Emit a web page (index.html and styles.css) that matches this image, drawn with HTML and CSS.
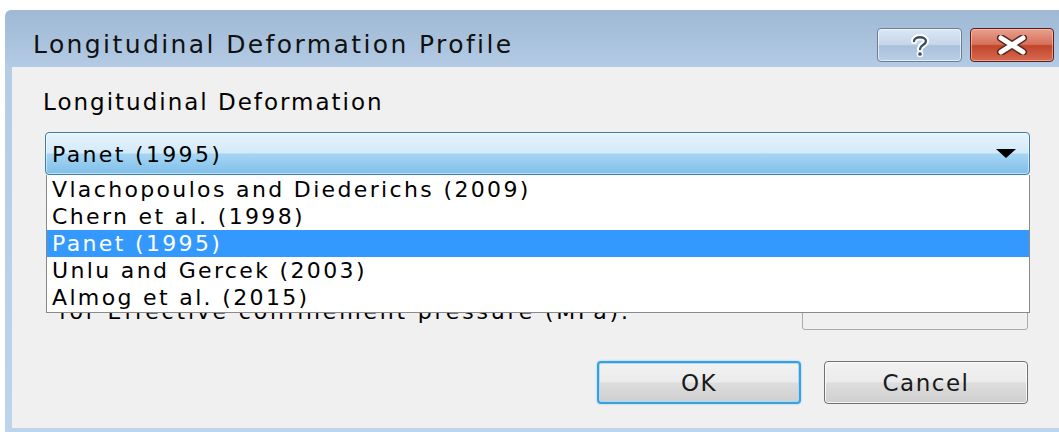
FILE: index.html
```html
<!DOCTYPE html>
<html>
<head>
<meta charset="utf-8">
<title>Longitudinal Deformation Profile</title>
<link rel="stylesheet" href="styles.css">
</head>
<body>
<div class="window">
  <div class="titlebar">
    <div class="title">Longitudinal Deformation Profile</div>
    <div class="caption-buttons">
      <div class="cap-btn help">
        <svg width="22" height="24" viewBox="0 0 22 24">
          <path d="M5 8 C5 3 17 3 17 8 C17 12 11 12 11 16" fill="none" stroke="#fff" stroke-width="6" stroke-linecap="round"/>
          <path d="M5 8 C5 3 17 3 17 8 C17 12 11 12 11 16" fill="none" stroke="#3d4f66" stroke-width="2.4" stroke-linecap="round"/>
          <circle cx="11" cy="21" r="2.6" fill="#3d4f66" stroke="#fff" stroke-width="1.5"/>
        </svg>
      </div>
      <div class="cap-btn close">
        <svg width="34" height="20" viewBox="0 0 34 20">
          <path d="M6 3 L28 17 M28 3 L6 17" stroke="#5a2a22" stroke-width="8" stroke-linecap="round"/>
          <path d="M6 3 L28 17 M28 3 L6 17" stroke="#fff" stroke-width="5" stroke-linecap="round"/>
        </svg>
      </div>
    </div>
  </div>
  <div class="client">
    <div class="field-label">Longitudinal Deformation</div>
    <div class="combo-wrap">
      <div class="combo">
        <span class="combo-text">Panet (1995)</span>
        <span class="combo-arrow"></span>
      </div>
      <ul class="dropdown">
        <li>Vlachopoulos and Diederichs (2009)</li>
        <li>Chern et al. (1998)</li>
        <li class="selected">Panet (1995)</li>
        <li>Unlu and Gercek (2003)</li>
        <li>Almog et al. (2015)</li>
      </ul>
    </div>
    <div class="param-row">
      <span class="param-label">for Effective confinement pressure (MPa):</span>
      <span class="param-input"></span>
    </div>
    <div class="actions">
      <button class="btn default">OK</button>
      <button class="btn">Cancel</button>
    </div>
  </div>
</div>
</body>
</html>
```

FILE: styles.css
```css
html, body {
  margin: 0;
  padding: 0;
  background: #ffffff;
  overflow: hidden;
}

body {
  font-family: "DejaVu Sans", "Liberation Sans", sans-serif;
  color: #000;
  width: 1059px;
  height: 432px;
}

.window {
  margin-top: 10px;
  margin-left: 5px;
  width: 1064px;
  height: 422px;
  background: linear-gradient(#9fb8d3, #b4cce6 60px, #bcd4ec);
  border-top-left-radius: 6px;
  display: flex;
  flex-direction: column;
  box-sizing: border-box;
  padding: 0 0 4px 7px;
}

.titlebar {
  height: 57px;
  display: flex;
  align-items: flex-start;
  justify-content: space-between;
  flex: none;
}

.title {
  font-size: 25px;
  letter-spacing: 2.4px;
  margin: 20px 0 0 21px;
  color: #111;
}

.caption-buttons {
  display: flex;
  gap: 8px;
  margin: 18px 15px 0 0;
}

.cap-btn {
  height: 34px;
  box-sizing: border-box;
  border-radius: 4px;
  display: flex;
  align-items: center;
  justify-content: center;
}

.cap-btn.help {
  width: 85px;
  border: 1px solid #6d7f96;
  background: linear-gradient(#dbe7f4, #c4d6ea 50%, #a9c1dc 52%, #b9cfe7);
  box-shadow: inset 0 0 0 1px rgba(255,255,255,0.6);
}

.cap-btn.close {
  width: 84px;
  border: 1px solid #5a1f18;
  background: linear-gradient(#e8a08f, #d5705a 48%, #c1442a 52%, #d76b50);
  box-shadow: inset 0 0 0 1px rgba(255,200,190,0.6);
}

.client {
  flex: 1;
  background: #f0f0f0;
  display: flex;
  flex-direction: column;
  padding: 0 0 0 31px;
  position: relative;
}

.field-label {
  font-size: 23px;
  letter-spacing: 2px;
  margin-top: 22px;
  height: 43px;
}

.combo-wrap {
  position: relative;
  width: 985px;
  margin-left: 2px;
}

.combo {
  height: 43px;
  box-sizing: border-box;
  border: 1px solid #3b7db0;
  border-radius: 4px;
  background: linear-gradient(#e7f3fc, #d3eaf9 48%, #a6d5f3 52%, #7fbfe9);
  box-shadow: inset 0 0 0 1px rgba(255,255,255,0.5);
  display: flex;
  align-items: center;
  justify-content: space-between;
  padding: 0 13px 0 6px;
}

.combo-text {
  font-size: 22px;
  letter-spacing: 2.35px;
  padding-top: 2px;
}

.combo-arrow {
  width: 0;
  height: 0;
  border-left: 10px solid transparent;
  border-right: 10px solid transparent;
  border-top: 9px solid #000;
}

.dropdown {
  position: absolute;
  top: 43px;
  left: 1px;
  right: 0;
  margin: 0;
  padding: 1px 0;
  list-style: none;
  background: #fff;
  border: 1px solid #8a8a8a;
  border-top: none;
  z-index: 2;
}

.dropdown li {
  height: 27px;
  line-height: 27px;
  font-size: 22px;
  letter-spacing: 2.35px;
  padding-left: 5px;
  white-space: nowrap;
}

.dropdown li.selected {
  background: #3399ff;
  color: #fff;
}

.param-row {
  display: flex;
  justify-content: space-between;
  align-items: flex-end;
  width: 985px;
  margin-top: 109px;
  height: 46px;
}

.param-label {
  font-size: 22px;
  letter-spacing: 2.8px;
  margin-left: 16px;
  margin-bottom: 6px;
}

.param-input {
  width: 226px;
  height: 46px;
  box-sizing: border-box;
  border: 1px solid #ababab;
  border-radius: 3px;
  background: #f0f0f0;
}

.actions {
  display: flex;
  justify-content: flex-end;
  gap: 23px;
  width: 985px;
  margin-top: 31px;
}

.btn {
  width: 204px;
  height: 43px;
  border: 1px solid #707070;
  border-radius: 4px;
  background: linear-gradient(#f2f2f2, #ebebeb 48%, #dddddd 52%, #cfcfcf);
  box-shadow: inset 0 0 0 1px rgba(255,255,255,0.8);
  font-family: "DejaVu Sans", "Liberation Sans", sans-serif;
  font-size: 23px;
  letter-spacing: 1.5px;
  color: #1a1a1a;
  padding: 0;
}

.btn.default {
  border: 2px solid #3c9fd9;
  box-shadow: inset 0 0 0 1px #a6dcf5, 0 0 2px #7cc4ec;
}
```
